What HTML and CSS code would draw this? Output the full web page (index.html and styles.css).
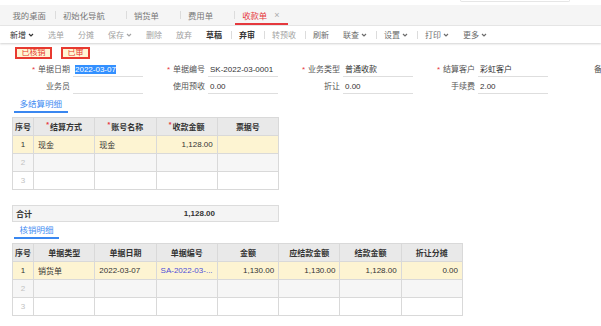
FILE: index.html
```html
<!DOCTYPE html>
<html>
<head>
    <meta charset="UTF-8">
    <link rel="stylesheet" href="styles.css">
</head>
<body>
    <div class="topline"><div class="search-edge"></div></div>

    <div class="tabs">
        <div class="tab first">我的桌面</div>
        <i class="tab-sep"></i>
        <div class="tab">初始化导航</div>
        <i class="tab-sep"></i>
        <div class="tab">销货单</div>
        <i class="tab-sep"></i>
        <div class="tab">费用单</div>
        <i class="tab-sep"></i>
        <div class="tab active">收款单<span class="close">×</span></div>
    </div>

    <div class="toolbar">
        <span class="tool on">新增<svg class="caret" width="6" height="4" viewBox="0 0 6 4"><path d="M1 1l2 2 2-2"/></svg></span>
        <span class="tool">选单</span>
        <span class="tool">分摊</span>
        <span class="tool">保存<svg class="caret" width="6" height="4" viewBox="0 0 6 4"><path d="M1 1l2 2 2-2"/></svg></span>
        <span class="tool">删除</span>
        <span class="tool">放弃</span>
        <span class="tool strong">草稿</span>
        <i class="tool-sep"></i>
        <span class="tool strong">弃审</span>
        <i class="tool-sep"></i>
        <span class="tool">转预收</span>
        <i class="tool-sep"></i>
        <span class="tool norm">刷新</span>
        <span class="tool norm">联查<svg class="caret" width="6" height="4" viewBox="0 0 6 4"><path d="M1 1l2 2 2-2"/></svg></span>
        <i class="tool-sep"></i>
        <span class="tool norm">设置<svg class="caret" width="6" height="4" viewBox="0 0 6 4"><path d="M1 1l2 2 2-2"/></svg></span>
        <i class="tool-sep"></i>
        <span class="tool norm">打印<svg class="caret" width="6" height="4" viewBox="0 0 6 4"><path d="M1 1l2 2 2-2"/></svg></span>
        <span class="tool norm">更多<svg class="caret" width="6" height="4" viewBox="0 0 6 4"><path d="M1 1l2 2 2-2"/></svg></span>
    </div>

    <div class="badges">
        <span class="badge">已核销</span>
        <span class="badge">已审</span>
    </div>

    <div class="form">
        <div class="form-row">
            <div class="field"><label><em>*</em>单据日期</label><div class="value"><span class="sel">2022-03-07</span></div></div>
            <div class="field"><label><em>*</em>单据编号</label><div class="value">SK-2022-03-0001</div></div>
            <div class="field"><label><em>*</em>业务类型</label><div class="value">普通收款</div></div>
            <div class="field"><label><em>*</em>结算客户</label><div class="value">彩虹客户</div></div>
            <div class="field"><label>备注</label><div class="value"></div></div>
        </div>
        <div class="form-row">
            <div class="field"><label>业务员</label><div class="value"></div></div>
            <div class="field"><label>使用预收</label><div class="value">0.00</div></div>
            <div class="field"><label>折让</label><div class="value">0.00</div></div>
            <div class="field"><label>手续费</label><div class="value">2.00</div></div>
        </div>
    </div>

    <div class="section first-section"><span>多结算明细</span></div>

    <table class="grid grid-pay">
        <colgroup>
            <col class="c-idx"><col><col><col><col>
        </colgroup>
        <thead>
            <tr>
                <th>序号</th>
                <th><em>*</em>结算方式</th>
                <th><em>*</em>账号名称</th>
                <th><em>*</em>收款金额</th>
                <th>票据号</th>
            </tr>
        </thead>
        <tbody>
            <tr class="hl"><td class="idx">1</td><td>现金</td><td>现金</td><td class="num">1,128.00</td><td></td></tr>
            <tr class="alt"><td class="idx">2</td><td></td><td></td><td></td><td></td></tr>
            <tr><td class="idx">3</td><td></td><td></td><td></td><td></td></tr>
        </tbody>
    </table>

    <div class="total">
        <span class="total-label">合计</span>
        <span class="total-num">1,128.00</span>
        <span></span>
    </div>

    <div class="section"><span>核销明细</span></div>

    <table class="grid grid-check">
        <colgroup>
            <col class="c-idx"><col><col><col><col><col><col><col>
        </colgroup>
        <thead>
            <tr>
                <th>序号</th>
                <th>单据类型</th>
                <th>单据日期</th>
                <th>单据编号</th>
                <th>金额</th>
                <th>应结款金额</th>
                <th>结款金额</th>
                <th>折让分摊</th>
            </tr>
        </thead>
        <tbody>
            <tr class="hl">
                <td class="idx">1</td>
                <td>销货单</td>
                <td>2022-03-07</td>
                <td class="link">SA-2022-03-...</td>
                <td class="num">1,130.00</td>
                <td class="num">1,130.00</td>
                <td class="num">1,128.00</td>
                <td class="num">0.00</td>
            </tr>
            <tr class="alt"><td class="idx">2</td><td></td><td></td><td></td><td></td><td></td><td></td><td></td></tr>
            <tr><td class="idx">3</td><td></td><td></td><td></td><td></td><td></td><td></td><td></td></tr>
        </tbody>
    </table>
</body>
</html>
```

FILE: styles.css
```css
* {
    box-sizing: border-box;
}

body {
    margin: 0;
    width: 601px;
    overflow: hidden;
    background: #fff;
    color: #333;
    font-family: "Liberation Sans", "Noto Sans CJK SC", sans-serif;
    font-size: 8px;
}

/* top strip */
.topline {
    height: 5px;
    display: flex;
}

.search-edge {
    width: 110px;
    height: 2px;
    margin-left: 460px;
    border: 1px solid #e6e6e6;
    border-top: none;
    border-radius: 0 0 3px 3px;
}

.tabs {
    height: 21px;
    display: flex;
    padding-left: 5.5px;
    background: #f5f5f5;
    border-bottom: 1px solid #e8e8e8;
    color: #777;
    font-size: 8.4px;
}

.tab {
    display: flex;
    align-items: center;
    padding: 0 21px 0 7px;
}

.tab.first {
    padding-right: 9px;
}

.tab.active {
    color: #e5383d;
    padding-right: 8px;
    box-shadow: inset 0 -2px 0 #e5383d;
}

.tab .close {
    margin-left: 7px;
    color: #aaa;
    font-size: 9px;
}

.tab-sep {
    width: 1px;
    height: 8px;
    align-self: center;
    background: #dcdcdc;
}

/* toolbar */
.toolbar {
    height: 17px;
    display: flex;
    align-items: center;
    padding-left: 3px;
    box-shadow: 0 1px 2px rgba(0, 0, 0, 0.18);
}

.tool {
    display: flex;
    align-items: center;
    padding: 0 7px;
    color: #a3a3a3;
}

.tool.on {
    color: #333;
}

.tool.norm {
    color: #6c6c6c;
}

.tool.strong {
    color: #333;
    font-weight: bold;
}

.caret {
    margin-left: 2px;
}

.caret path {
    fill: none;
    stroke: currentColor;
    stroke-width: 1.2;
}

.tool-sep {
    width: 1px;
    height: 8px;
    margin: 0 0.5px 0 1.5px;
    background: #dcdcdc;
}

/* badges */
.badges {
    display: flex;
    gap: 9px;
    padding-left: 15px;
    margin-top: 4px;
}

.badge {
    height: 12px;
    line-height: 8px;
    padding: 0 4.5px;
    border: 2px solid #e83a30;
    background: #fff6d4;
    color: #e6372e;
}

/* form */
.form {
    padding-left: 8px;
    margin-top: 4px;
}

.form-row {
    display: flex;
    height: 14px;
    white-space: nowrap;
    overflow: hidden;
}

.form-row + .form-row {
    margin-top: 3px;
}

.field {
    flex: none;
    display: flex;
    width: 135px;
}

.field label {
    width: 62px;
    margin-right: 3px;
    text-align: right;
    line-height: 14px;
    color: #555;
}

.field label em {
    font-style: normal;
    color: #e8383d;
    margin-right: 3px;
}

.value {
    width: 70px;
    height: 14px;
    line-height: 13px;
    padding-left: 2px;
    border-bottom: 1px solid #dedede;
    color: #333;
}

.sel {
    background: #3390ff;
    color: #fff;
}

/* section tabs */
.section {
    display: flex;
    padding-left: 14px;
    margin-top: 2px;
}

.first-section {
    margin-top: 4px;
}

.section span {
    padding: 0 5.5px;
    line-height: 13px;
    font-size: 8.5px;
    color: #3f8cf2;
    border-bottom: 2px solid #3a87f0;
}

/* grids */
.grid {
    border-collapse: collapse;
    table-layout: fixed;
    margin: 4px 0 0 12px;
}

.grid-pay {
    width: 267px;
}

.grid-check {
    width: 451px;
}

.grid .c-idx {
    width: 21px;
}

.grid th,
.grid td {
    height: 18px;
    padding: 0 4px;
    border: 1px solid #d9d9d9;
    white-space: nowrap;
    overflow: hidden;
}

.grid th {
    background: #e9e9e9;
    font-weight: bold;
    text-align: center;
    padding: 0 1px;
}

.grid th em {
    font-style: normal;
    color: #e8383d;
    font-size: 7px;
    vertical-align: top;
    margin-right: 1px;
}

.grid .hl td {
    background: #fdf4d2;
}

.grid .alt td {
    background: #f6f6f6;
}

.grid td.idx {
    text-align: center;
    color: #c2c2c2;
    padding: 0;
}

.grid .hl td.idx {
    color: #333;
}

.grid td.num {
    text-align: right;
}

.grid td.link {
    color: #4f4fd8;
}

/* total row */
.total {
    display: grid;
    grid-template-columns: 144px 61px 1fr;
    align-items: center;
    width: 267px;
    height: 17px;
    margin: 15px 0 0 12px;
    background: #f4f4f4;
    border: 1px solid #dcdcdc;
    font-weight: bold;
}

.total-label {
    padding-left: 3px;
}

.total-num {
    text-align: right;
    padding-right: 3px;
}
```
